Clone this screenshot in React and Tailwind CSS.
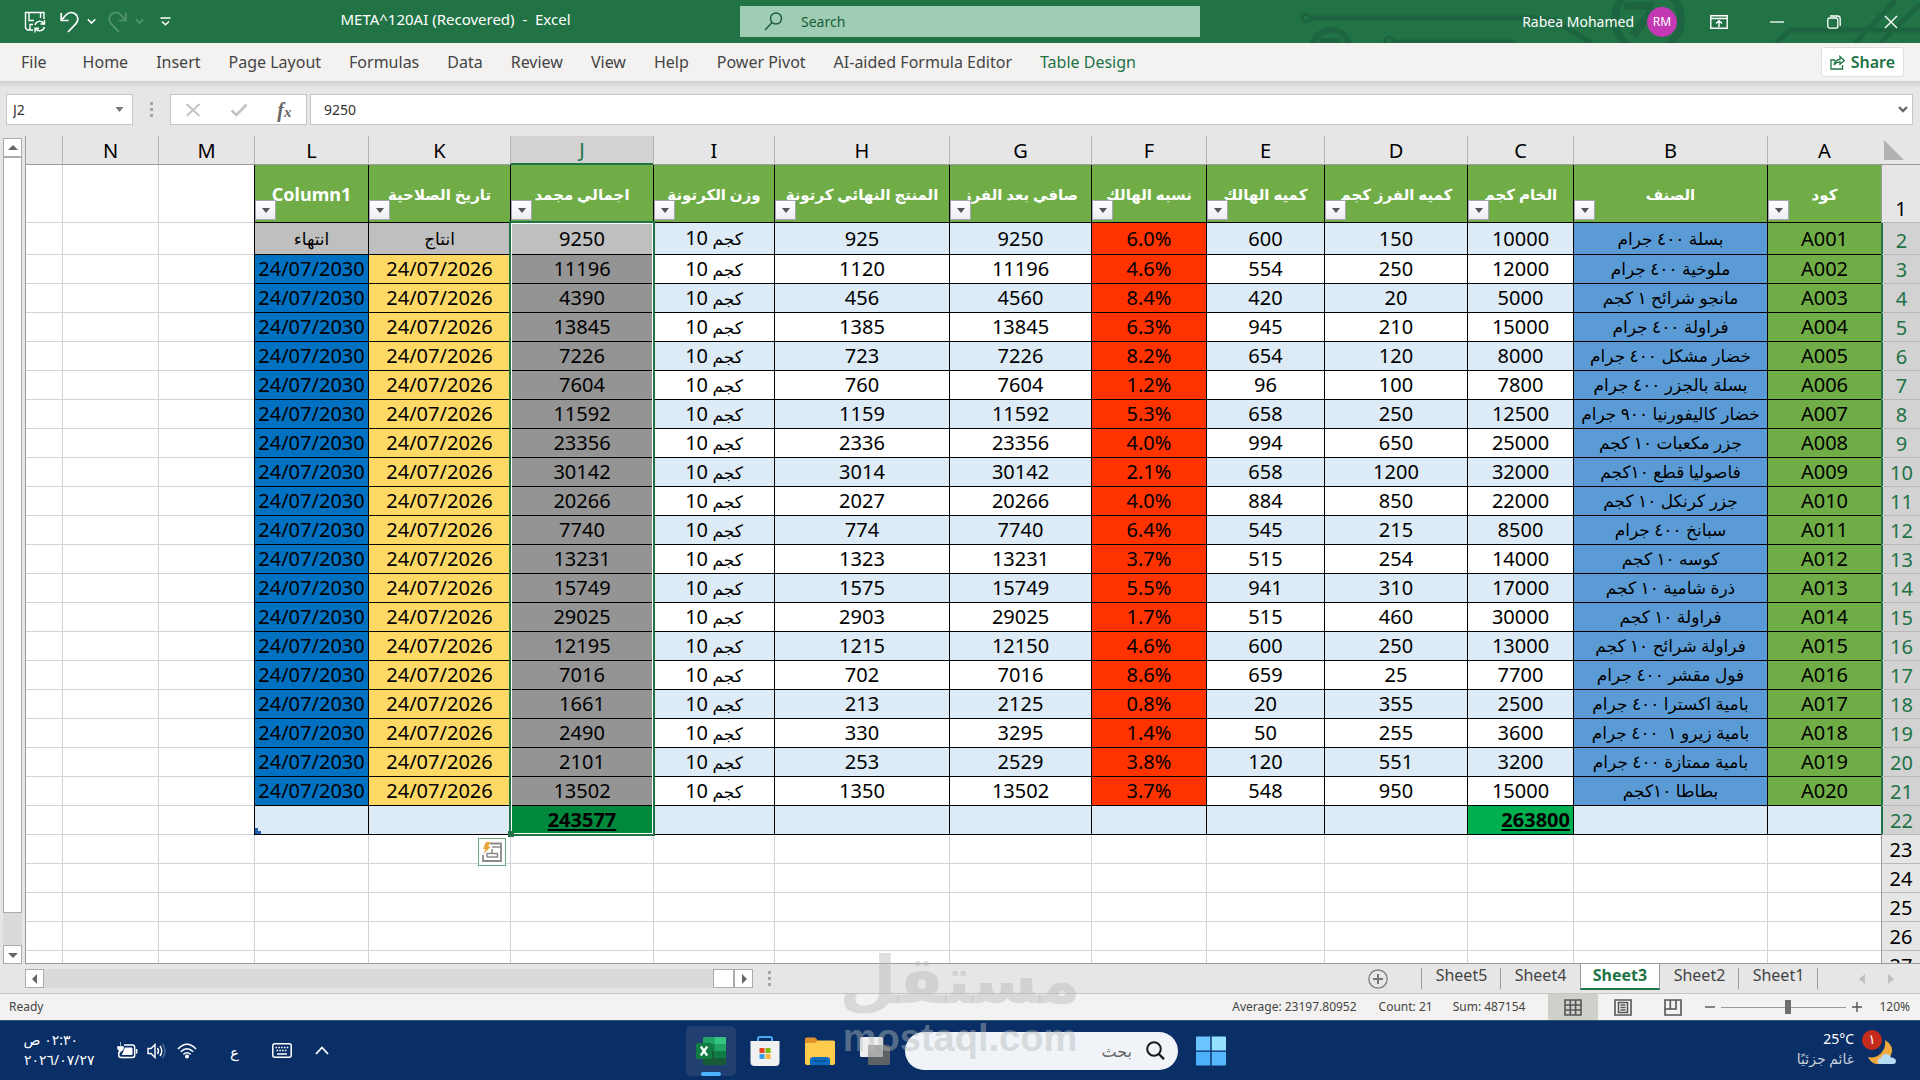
import React from "react";

const COLUMNS = [
  { id: "A", width: "w-[114px]", head: "كود" },
  { id: "B", width: "w-[194px]", head: "الصنف" },
  { id: "C", width: "w-[106px]", head: "الخام كجم" },
  { id: "D", width: "w-[143px]", head: "كميه الفرز كجم" },
  { id: "E", width: "w-[118px]", head: "كميه الهالك" },
  { id: "F", width: "w-[115px]", head: "نسبه الهالك" },
  { id: "G", width: "w-[142px]", head: "صافي بعد الفرز" },
  { id: "H", width: "w-[175px]", head: "المنتج النهائي كرتونة" },
  { id: "I", width: "w-[121px]", head: "وزن الكرتونة" },
  { id: "J", width: "w-[143px]", head: "اجمالي مجمد" },
  { id: "K", width: "w-[142px]", head: "تاريخ الصلاحية" },
  { id: "L", width: "w-[114px]", head: "Column1" },
];

const W = "كجم 10";
const P = "24/07/2026";
const X = "24/07/2030";
const DATA = [
  ["A001", "بسلة ٤٠٠ جرام", 10000, 150, 600, "6.0%", 9250, 925, W, 9250, "انتاج", "انتهاء"],
  ["A002", "ملوخية ٤٠٠ جرام", 12000, 250, 554, "4.6%", 11196, 1120, W, 11196, P, X],
  ["A003", "مانجو شرائح ١ كجم", 5000, 20, 420, "8.4%", 4560, 456, W, 4390, P, X],
  ["A004", "فراولة ٤٠٠ جرام", 15000, 210, 945, "6.3%", 13845, 1385, W, 13845, P, X],
  ["A005", "خضار مشكل ٤٠٠ جرام", 8000, 120, 654, "8.2%", 7226, 723, W, 7226, P, X],
  ["A006", "بسلة بالجزر ٤٠٠ جرام", 7800, 100, 96, "1.2%", 7604, 760, W, 7604, P, X],
  ["A007", "خضار كاليفورنيا ٩٠٠ جرام", 12500, 250, 658, "5.3%", 11592, 1159, W, 11592, P, X],
  ["A008", "جزر مكعبات ١٠ كجم", 25000, 650, 994, "4.0%", 23356, 2336, W, 23356, P, X],
  ["A009", "فاصوليا قطع ١٠كجم", 32000, 1200, 658, "2.1%", 30142, 3014, W, 30142, P, X],
  ["A010", "جزر كرنكل ١٠ كجم", 22000, 850, 884, "4.0%", 20266, 2027, W, 20266, P, X],
  ["A011", "سبانخ ٤٠٠ جرام", 8500, 215, 545, "6.4%", 7740, 774, W, 7740, P, X],
  ["A012", "كوسه ١٠ كجم", 14000, 254, 515, "3.7%", 13231, 1323, W, 13231, P, X],
  ["A013", "ذرة شامية ١٠ كجم", 17000, 310, 941, "5.5%", 15749, 1575, W, 15749, P, X],
  ["A014", "فراولة ١٠ كجم", 30000, 460, 515, "1.7%", 29025, 2903, W, 29025, P, X],
  ["A015", "فراولة شرائح ١٠ كجم", 13000, 250, 600, "4.6%", 12150, 1215, W, 12195, P, X],
  ["A016", "فول مقشر ٤٠٠ جرام", 7700, 25, 659, "8.6%", 7016, 702, W, 7016, P, X],
  ["A017", "بامية اكسترا ٤٠٠ جرام", 2500, 355, 20, "0.8%", 2125, 213, W, 1661, P, X],
  ["A018", "بامية زيرو ١  ٤٠٠ جرام", 3600, 255, 50, "1.4%", 3295, 330, W, 2490, P, X],
  ["A019", "بامية ممتازة ٤٠٠ جرام", 3200, 551, 120, "3.8%", 2529, 253, W, 2101, P, X],
  ["A020", "بطاطا ١٠كجم", 15000, 950, 548, "3.7%", 13502, 1350, W, 13502, P, X],
];

const FILLS = {
  A: "bg-[#70ad47]",
  B: "bg-[#5b9bd5]",
  F: "bg-[#ff3300]",
  J: "bg-[#949494]",
  K: "bg-[#ffd966]",
  L: "bg-[#0070c0]",
};

function fillFor(col, rowIndex) {
  if (rowIndex === 0 && (col === "J" || col === "K" || col === "L")) return "bg-[#bfbfbf]";
  return FILLS[col] || (rowIndex % 2 === 0 ? "bg-[#ddebf7]" : "bg-white");
}

const EMPTY_GRID = ["M", "N", "O"];
const MENU = ["Home", "Insert", "Page Layout", "Formulas", "Data", "Review", "View", "Help", "Power Pivot", "AI-aided Formula Editor"];

function Chevron({ className }) {
  return (
    <svg className={className} viewBox="0 0 8 6" fill="none" stroke="currentColor" strokeWidth="1.4">
      <path d="M0.7 1 L4 4.4 L7.3 1" />
    </svg>
  );
}

function Dots() {
  return (
    <span className="flex flex-col gap-[3px]" aria-hidden="true">
      <i className="size-[3px] bg-[#a6a6a6]" />
      <i className="size-[3px] bg-[#a6a6a6]" />
      <i className="size-[3px] bg-[#a6a6a6]" />
    </span>
  );
}

function TitleBar() {
  return (
    <header className="relative grid h-[43px] shrink-0 grid-cols-[37fr_23fr_36fr] items-center overflow-hidden bg-[#217346] text-white">
      <svg className="absolute top-0 right-0 h-[43px] w-[640px] text-[#1d6540]" viewBox="0 0 640 43" fill="none" stroke="currentColor" strokeWidth="5">
        <circle cx="26" cy="18" r="4" strokeWidth="3" />
        <path d="M31 18 H252" />
        <circle cx="51" cy="49" r="19" strokeWidth="6" />
        <path d="M39 41 H60" strokeWidth="6" />
        <circle cx="109" cy="41" r="4" strokeWidth="3" />
        <path d="M114 42 H235" />
        <path d="M248 17 L272 20 L312 43" />
        <circle cx="368" cy="19" r="33" strokeWidth="8" />
        <path d="M344 6 H374 M374 8 L353 36" strokeWidth="8" />
        <path d="M496 43 L510 30 H640" />
        <path d="M575 43 L616 0 M600 43 L640 4" />
      </svg>
      <div className="relative flex items-center pl-6">
        <button aria-label="Save" className="mr-[14px]">
          <svg className="h-[22px] w-[22px]" viewBox="0 0 22 22" fill="none" stroke="currentColor" strokeWidth="1.4">
            <path d="M9 19 H3.5 L1.5 17 V1.5 H20 V8" />
            <path d="M5 1.5 V9.5 H10 M16.5 1.5 V7" />
            <path d="M6 19 V13.5 H9" />
            <path d="M11 14 A5 5 0 0 1 20 12.5 M20.5 9 V13 H16.5 M20.5 16 A5 5 0 0 1 11.5 17.5 M11 21.5 V17.3 H15" />
          </svg>
        </button>
        <button aria-label="Undo" className="mr-2">
          <svg className="h-[22px] w-[19px]" viewBox="0 0 19 22" fill="none" stroke="currentColor" strokeWidth="1.7">
            <path d="M1.2 2 V9.5 H8.5 M1.5 9 L6 4 C9 0.8 13 0.8 15.8 3.4 C18.6 6 18.4 10 15.8 12.8 L8 21" />
          </svg>
        </button>
        <button aria-label="Undo options"><Chevron className="h-[7px] w-[9px]" /></button>
        <button aria-label="Redo" className="mr-2 ml-3 text-[#55966f]">
          <svg className="h-[22px] w-[19px]" viewBox="0 0 19 22" fill="none" stroke="currentColor" strokeWidth="1.7">
            <path d="M17.8 2 V9.5 H10.5 M17.5 9 L13 4 C10 0.8 6 0.8 3.2 3.4 C0.4 6 0.6 10 3.2 12.8 L11 21" />
          </svg>
        </button>
        <button aria-label="Redo options" className="text-[#55966f]"><Chevron className="h-[7px] w-[9px]" /></button>
        <button aria-label="Customize toolbar" className="ml-4">
          <svg className="h-[9px] w-[11px]" viewBox="0 0 11 9" fill="none" stroke="currentColor" strokeWidth="1.5">
            <path d="M0.5 1 H10.5 M2 4.5 L5.5 7.8 L9 4.5" />
          </svg>
        </button>
        <h1 className="flex-1 pb-1 text-center text-[15px] whitespace-pre">META^120AI (Recovered)  -  Excel</h1>
      </div>
      <label className="relative flex h-[31px] items-center gap-[18px] bg-[#9fcdb3] pl-6 text-[#185c37]">
        <svg className="h-[19px] w-[19px]" viewBox="0 0 19 19" fill="none" stroke="currentColor" strokeWidth="1.4">
          <circle cx="12" cy="6.5" r="5.5" />
          <path d="M8 10.5 L1 18" />
        </svg>
        <input className="min-w-0 flex-1 bg-transparent text-[14px] outline-none placeholder:text-[#185c37]" placeholder="Search" aria-label="Search" />
      </label>
      <div className="relative flex items-center justify-end">
        <span className="mr-[13px] text-[14px]">Rabea Mohamed</span>
        <button className="mr-[33px] flex size-[30px] items-center justify-center rounded-full bg-[#c239b3] text-[12px]">RM</button>
        <button aria-label="Ribbon display options" className="mr-[42px]">
          <svg className="h-[14px] w-[18px]" viewBox="0 0 18 14" fill="none" stroke="currentColor" strokeWidth="1.4">
            <path d="M0.8 0.8 H17.2 V13.2 H0.8 Z M1 3.5 H17 M9 12 V6 M6 8.5 L9 5.6 L12 8.5" />
          </svg>
        </button>
        <button aria-label="Minimize" className="mr-[43px]"><svg className="h-[14px] w-[14px]" viewBox="0 0 14 14" stroke="currentColor" strokeWidth="1.3"><path d="M0 7 H14" /></svg></button>
        <button aria-label="Restore" className="mr-[43px]">
          <svg className="h-[14px] w-[14px]" viewBox="0 0 14 14" fill="none" stroke="currentColor" strokeWidth="1.3">
            <rect x="0.8" y="3" width="10" height="10.2" rx="2" />
            <path d="M3 1 H10.5 A2.7 2.7 0 0 1 13.2 3.7 V11" />
          </svg>
        </button>
        <button aria-label="Close" className="mr-[22px]"><svg className="h-[14px] w-[14px]" viewBox="0 0 14 14" stroke="currentColor" strokeWidth="1.4"><path d="M1 1 L13 13 M13 1 L1 13" /></svg></button>
      </div>
    </header>
  );
}

function Ribbon() {
  return (
    <nav className="flex h-[38px] shrink-0 items-center bg-[#f3f2f1] pl-[7px] text-[16px] text-[#444]">
      <button className="mr-2 px-[14px]">File</button>
      {MENU.map((m) => <button key={m} className="px-[14px] whitespace-nowrap">{m}</button>)}
      <button className="px-[14px] whitespace-nowrap text-[#217346]">Table Design</button>
      <button className="mr-4 ml-auto flex h-[30px] items-center gap-[6px] rounded-[3px] border border-[#e1dfdd] bg-white px-2 font-semibold text-[#217346]">
        <svg className="h-[15px] w-[15px]" viewBox="0 0 15 15" fill="none" stroke="currentColor" strokeWidth="1.3">
          <path d="M5 5 H1 V14 H12.5 V10" />
          <path d="M4 10 C4.5 6.5 7 4.5 10 4.5 V1.5 L14.3 5.5 L10 9.3 V6.8 C7.5 6.8 5.5 7.8 4 10 Z" />
        </svg>
        Share
      </button>
    </nav>
  );
}

function FormulaBar() {
  return (
    <section className="flex h-[55px] shrink-0 items-start bg-gradient-to-b from-[#cfcfcf] to-[#e6e6e6] to-[12%] pt-[13px] pr-[7px] pl-[6px] text-[14px] text-[#333]">
      <div className="flex h-[31px] w-[127px] items-center border border-[#c6c6c6] bg-white pr-2 pl-[6px]">
        <input className="min-w-0 flex-1 outline-none" aria-label="Name box" defaultValue="J2" />
        <svg className="h-[5px] w-[9px]" viewBox="0 0 9 5"><path d="M0.5 0 H8.5 L4.5 5 Z" fill="#777" /></svg>
      </div>
      <div className="flex h-[31px] w-[37px] items-center justify-center"><Dots /></div>
      <div className="mr-[3px] flex h-[31px] w-[137px] items-center justify-around border border-[#c6c6c6] bg-white">
        <button aria-label="Cancel"><svg className="h-[14px] w-[16px]" viewBox="0 0 16 14" stroke="#c3c3c3" strokeWidth="2"><path d="M1.5 1 L14.5 13 M14.5 1 L1.5 13" /></svg></button>
        <button aria-label="Enter"><svg className="h-[14px] w-[18px]" viewBox="0 0 18 14" fill="none" stroke="#c3c3c3" strokeWidth="2.6"><path d="M1.5 7.5 L6.5 12 L16.5 1.5" /></svg></button>
        <button aria-label="Insert function" className="font-['Liberation_Serif',serif] text-[20px] leading-none font-bold text-[#666] italic">f<span className="text-[15px]">x</span></button>
      </div>
      <div className="flex h-[31px] flex-1 items-center border border-[#c6c6c6] bg-white pr-1 pl-[13px]">
        <input className="min-w-0 flex-1 outline-none" aria-label="Formula" defaultValue="9250" />
        <button aria-label="Expand formula bar" className="text-[#666]"><svg className="h-[7px] w-[10px]" viewBox="0 0 10 7" fill="none" stroke="currentColor" strokeWidth="2.4"><path d="M1 1 L5 5 L9 1" /></svg></button>
      </div>
    </section>
  );
}

function ArrowButton({ label, path }) {
  return (
    <button aria-label={label} className="flex h-[19px] w-[19px] shrink-0 items-center justify-center border border-[#ababab] bg-white">
      <svg className="size-[10px]" viewBox="0 0 10 10"><path d={path} fill="#666" /></svg>
    </button>
  );
}

function RowHeader({ n, selected }) {
  return (
    <th scope="row" className={`border-b border-b-[#b8b8b8] p-0 text-center align-bottom font-normal ${selected ? "border-l-2 border-l-[#217346] bg-[#d2d2d2] text-[#217346]" : "border-l border-l-[#9b9b9b]"}`}>
      {n}
    </th>
  );
}

function BlankCells() {
  return EMPTY_GRID.map((c) => <td key={c} className={`border-b border-[#d4d4d4] bg-white ${c === "O" ? "" : "border-l"}`} />);
}

function Sheet() {
  return (
    <table dir="rtl" className="w-full table-fixed border-separate border-spacing-0 text-[20px] leading-[26px] text-black">
      <colgroup>
        <col className="w-[39px]" />
        {COLUMNS.map((c) => <col key={c.id} className={c.width} />)}
        <col className="w-[96px]" />
        <col className="w-[96px]" />
        <col />
      </colgroup>
      <thead>
        <tr className="h-[29px]">
          <td className="border-b border-[#9b9b9b] p-0">
            <svg className="mr-auto ml-[3px] h-[20px] w-[20px]" viewBox="0 0 20 20"><path d="M0 0 V20 H20 Z" fill="#b1b1b1" /></svg>
          </td>
          {COLUMNS.map((c) => (
            <th key={c.id} scope="col" className={`border-l border-l-[#b4b4b4] p-0 text-center align-bottom font-normal ${c.id === "J" ? "border-b-2 border-b-[#217346] bg-[#d2d2d2] text-[#217346]" : "border-b border-b-[#9b9b9b]"}`}>
              {c.id}
            </th>
          ))}
          {EMPTY_GRID.map((c) => (
            <th key={c} scope="col" className={`border-b border-b-[#9b9b9b] border-l-[#b4b4b4] p-0 text-center align-bottom font-normal ${c === "O" ? "" : "border-l"}`}>{c === "O" ? "" : c}</th>
          ))}
        </tr>
      </thead>
      <tbody>
        <tr className="h-[58px]">
          <RowHeader n={1} />
          {COLUMNS.map((c) => (
            <td key={c.id} className={`relative border-b border-l border-black bg-[#70ad47] p-0 text-center font-bold whitespace-nowrap text-white ${c.id === "L" ? "text-[18px]" : "text-[15px]"}`}>
              {c.head}
              <button aria-label={`Filter ${c.head}`} className="absolute bottom-[2px] left-0 flex h-[20px] w-[21px] items-center justify-center border border-[#a6a6b4] bg-gradient-to-b from-white to-[#eceef2]">
                <svg className="h-[5px] w-[8px]" viewBox="0 0 8 5"><path d="M0 0 H8 L4 5 Z" fill="#555" /></svg>
              </button>
            </td>
          ))}
          <BlankCells />
        </tr>
        {DATA.map((row, r) => (
          <tr key={row[0]} className={r === 0 ? "h-[32px]" : "h-[29px]"}>
            <RowHeader n={r + 2} selected />
            {COLUMNS.map((c, i) => (
              <td key={c.id} className={`border-b border-l border-black p-0 text-center whitespace-pre ${fillFor(c.id, r)} ${c.id === "J" && r === 0 ? "relative" : ""} ${c.id === "B" || c.id === "I" || (r === 0 && i > 9) ? "text-[17px]" : ""}`}>
                {c.id === "I" ? <>كجم <span className="text-[20px]">10</span></> : row[i]}
                {c.id === "J" && r === 0 && (
                  <span className="pointer-events-none absolute top-[-2px] right-[-2px] left-[-2px] z-10 h-[615px] border-2 border-[#217346]">
                    <span className="block h-full border border-white" />
                    <span className="absolute bottom-[-3px] left-[-3px] size-[6px] bg-[#217346]" />
                  </span>
                )}
              </td>
            ))}
            <BlankCells />
          </tr>
        ))}
        <tr className="h-[29px]">
          <RowHeader n={22} selected />
          {COLUMNS.map((c) => {
            if (c.id === "C") return <td key={c.id} className="border-b border-l border-black bg-[#00b050] p-0 pr-[3px] text-right font-bold underline underline-offset-2">263800</td>;
            if (c.id === "J") return <td key={c.id} className="border-b border-l border-black bg-[#00893d] p-0 text-center font-bold underline underline-offset-2">243577</td>;
            return (
              <td key={c.id} className="border-b border-l border-black bg-[#ddebf7] p-0 align-bottom">
                {c.id === "L" && <svg className="mr-auto size-[6px]" viewBox="0 0 6 6"><path d="M0 0 H3 V3 H6 V6 H0 Z" fill="#1f5fae" /></svg>}
              </td>
            );
          })}
          <BlankCells />
        </tr>
        {[23, 24, 25, 26, 27].map((n) => (
          <tr key={n} className="h-[29px]">
            <RowHeader n={n} />
            {COLUMNS.map((c) => (
              <td key={c.id} className="relative border-b border-l border-[#d4d4d4] bg-white p-0">
                {n === 23 && c.id === "K" && (
                  <button aria-label="Quick analysis" className="absolute top-[3px] right-1 z-20 flex size-[28px] items-center justify-center border border-[#6faa86] bg-white">
                    <svg className="size-[22px]" viewBox="0 0 22 22" fill="none" stroke="#8a8a8a" strokeWidth="1.8">
                      <path d="M9 2.5 H20 V20 H2 V14" />
                      <path d="M11 6 H20 M6 16 V12.5 H11 V8 M6 16 H16.5 V12.5 H11" strokeWidth="1.5" />
                      <path d="M5 1 H9.5 L7 5.5 H10 L2.5 13 L4.5 8 H2 Z" fill="#e8a33d" stroke="none" />
                    </svg>
                  </button>
                )}
              </td>
            ))}
            <BlankCells />
          </tr>
        ))}
      </tbody>
    </table>
  );
}

function SheetTab({ name, divided }) {
  return (
    <button className="relative flex h-[22px] w-[79px] items-center justify-center self-start">
      {name}
      {divided && <span className="absolute top-[4px] right-0 h-[21px] w-px bg-[#9b9b9b]" />}
    </button>
  );
}

function SheetTabs() {
  return (
    <section className="flex h-[30px] shrink-0 items-center border-b border-[#c6c6c6] bg-[#e6e6e6] pl-[25px] text-[16px] text-[#444]">
      <div className="flex w-[728px] items-center bg-[#dadada]">
        <ArrowButton label="Scroll left" path="M7 0 V10 L2 5 Z" />
        <span className="ml-auto h-[19px] w-[21px] border border-[#ababab] bg-white" />
        <ArrowButton label="Scroll right" path="M3 0 V10 L8 5 Z" />
      </div>
      <span className="ml-[15px]"><Dots /></span>
      <button aria-label="New sheet" className="mr-[33px] ml-auto">
        <svg className="size-[20px]" viewBox="0 0 20 20" fill="none" stroke="#767676"><circle cx="10" cy="10" r="9.2" strokeWidth="1.2" /><path d="M10 5 V15 M5 10 H15" strokeWidth="2" /></svg>
      </button>
      <span className="h-[21px] w-px bg-[#9b9b9b]" />
      <SheetTab name="Sheet5" divided />
      <SheetTab name="Sheet4" />
      <button className="flex h-[26px] w-[80px] items-center justify-center self-start border-x border-b-2 border-x-[#9b9b9b] border-b-[#217346] bg-white pb-[2px] font-bold text-[#217346]">Sheet3</button>
      <SheetTab name="Sheet2" divided />
      <SheetTab name="Sheet1" divided />
      <button aria-label="Previous sheet" className="ml-[40px]"><svg className="h-[10px] w-[8px]" viewBox="0 0 8 10"><path d="M7 0 V10 L1 5 Z" fill="#c0c0c0" /></svg></button>
      <button aria-label="Next sheet" className="mr-[25px] ml-[21px]"><svg className="h-[10px] w-[8px]" viewBox="0 0 8 10"><path d="M1 0 V10 L7 5 Z" fill="#c0c0c0" /></svg></button>
    </section>
  );
}

function StatusBar() {
  return (
    <section className="flex h-[26px] shrink-0 items-center bg-[#f3f2f1] pl-[9px] text-[12px] text-[#444]">
      <span>Ready</span>
      <span className="ml-auto">Average: 23197.80952</span>
      <span className="ml-[22px]">Count: 21</span>
      <span className="ml-5">Sum: 487154</span>
      <button aria-label="Normal view" className="ml-[23px] flex h-full w-[50px] items-center justify-center bg-[#cfcfcb]">
        <svg className="h-[17px] w-[18px]" viewBox="0 0 18 17" fill="none" stroke="#555" strokeWidth="1.6"><path d="M1 1 H17 V16 H1 Z M1 6 H17 M1 11 H17 M6.3 1 V16 M11.6 1 V16" /></svg>
      </button>
      <button aria-label="Page layout view" className="flex h-full w-[50px] items-center justify-center">
        <svg className="h-[17px] w-[18px]" viewBox="0 0 18 17" fill="none" stroke="#555" strokeWidth="1.6"><path d="M1 1 H17 V16 H1 Z M4.5 3.5 H13.5 V13.5 H4.5 Z M6.5 6 H11.5 M6.5 8.5 H11.5 M6.5 11 H11.5" /></svg>
      </button>
      <button aria-label="Page break view" className="flex h-full w-[50px] items-center justify-center">
        <svg className="h-[17px] w-[18px]" viewBox="0 0 18 17" fill="none" stroke="#555" strokeWidth="1.6"><path d="M1 1 H17 V16 H1 Z M1 10 H12 V1 M6.3 1 V10" /></svg>
      </button>
      <button aria-label="Zoom out" className="ml-[7px]"><svg className="size-[10px]" viewBox="0 0 10 10" stroke="#555" strokeWidth="1.4"><path d="M0 5 H10" /></svg></button>
      <input
        type="range"
        aria-label="Zoom"
        min="10"
        max="230"
        defaultValue="128"
        className="mx-[6px] h-[14px] w-[125px] appearance-none bg-[linear-gradient(#9b9b9b,#9b9b9b)] bg-[length:100%_1px] bg-center bg-no-repeat [&::-webkit-slider-thumb]:h-[14px] [&::-webkit-slider-thumb]:w-[6px] [&::-webkit-slider-thumb]:appearance-none [&::-webkit-slider-thumb]:bg-[#6e6e6e]"
      />
      <button aria-label="Zoom in"><svg className="size-[10px]" viewBox="0 0 10 10" stroke="#555" strokeWidth="1.4"><path d="M0 5 H10 M5 0 V10" /></svg></button>
      <button className="mr-[10px] ml-[17px]">120%</button>
    </section>
  );
}

function Taskbar() {
  return (
    <footer className="grid h-[60px] shrink-0 grid-cols-[1fr_auto_1fr] items-center border-t border-[#2a5a70] bg-[#0a2f66] text-white">
      <div className="flex items-center pl-6">
        <div className="w-[93px] pb-[2px] text-[14px] leading-[20px]">
          <p dir="rtl" className="w-[54px] whitespace-nowrap">٠٢:٣٠ ص</p>
          <p className="w-[72px] whitespace-nowrap">٢٠٢٦/٠٧/٢٧</p>
        </div>
        <svg className="mr-[9px] h-[17px] w-[21px]" viewBox="0 0 21 17" fill="none" stroke="#fff" strokeWidth="1.5">
          <path d="M7 3 H15.5 A2.2 2.2 0 0 1 17.7 5.2 V13.3 A2.2 2.2 0 0 1 15.5 15.5 H4 A2.2 2.2 0 0 1 1.8 13.3 V10" />
          <path d="M8 5.5 H14.5 Q15.5 5.5 15.5 6.5 V12 Q15.5 13 14.5 13 H4.8 Z" fill="#fff" stroke="none" />
          <path d="M19 7 H20.4 V11.5 H19 Z" fill="#fff" stroke="none" />
          <path d="M3.5 0 V4 M0.5 4.5 H6.5 V7 Q5.5 8.5 2 11 L2 8.5 L0.5 7 Z" fill="#fff" strokeWidth="0.6" />
        </svg>
        <svg className="mr-[10px] h-[16px] w-[20px]" viewBox="0 0 20 16" fill="none" stroke="#fff" strokeWidth="1.4">
          <path d="M1 5.5 H4 L8 1.5 V14.5 L4 10.5 H1 Z" />
          <path d="M10.5 5 Q12.5 8 10.5 11 M13 3 Q16.5 8 13 13" />
          <path d="M15.5 1 Q20.5 8 15.5 15" stroke="#4f6d94" />
        </svg>
        <svg className="h-[16px] w-[20px]" viewBox="0 0 20 16" fill="none" stroke="#fff" strokeWidth="1.5">
          <path d="M1 6 Q10 -3.5 19 6 M3.8 8.8 Q10 2.5 16.2 8.8 M6.4 11.4 Q10 8 13.6 11.4" />
          <circle cx="10" cy="13.6" r="2" fill="#fff" stroke="none" />
        </svg>
        <span className="mx-[33px] pt-1 text-[15px]">ع</span>
        <svg className="mr-[23px] h-[15px] w-[20px]" viewBox="0 0 20 15" fill="none" stroke="#fff" strokeWidth="1.5">
          <rect x="0.8" y="0.8" width="18.4" height="13.4" rx="2" />
          <path d="M3.5 4.5 H16.5 M4.5 7.5 H15.5" strokeDasharray="1.6 1.2" strokeWidth="1.6" />
          <path d="M5 11 H15" />
        </svg>
        <button aria-label="Hidden icons"><svg className="h-[9px] w-[14px]" viewBox="0 0 14 9" fill="none" stroke="#fff" strokeWidth="1.8"><path d="M1 8 L7 1.5 L13 8" /></svg></button>
      </div>
      <div className="flex items-center">
        <button aria-label="Excel" className="relative mr-[14px] flex size-[50px] items-center justify-center rounded-[5px] bg-[#213f70]">
          <svg className="size-[30px]" viewBox="0 0 30 30">
            <rect x="7" y="1" width="23" height="28" rx="1.5" fill="#21a366" />
            <path d="M7 8 H18.5 V15 H7 Z" fill="#107c41" /><path d="M18.5 1 H30 V8 H18.5 Z" fill="#33c481" /><path d="M18.5 15 H30 V22 H18.5 Z" fill="#107c41" /><path d="M7 15 H18.5 V22 H7 Z M7 22 H30 V28 Q30 29 29 29 H8 Q7 29 7 28 Z" fill="#185c37" />
            <rect x="0" y="7" width="16" height="16" rx="1.5" fill="#107c41" />
            <path d="M4.8 10.5 L11.2 19.5 M11.2 10.5 L4.8 19.5" stroke="#fff" strokeWidth="2.2" />
          </svg>
          <span className="absolute bottom-0 left-[15px] h-[4px] w-[20px] rounded-full bg-[#4db2ff]" />
        </button>
        <button aria-label="Store" className="mr-[25px]">
          <svg className="size-[30px]" viewBox="0 0 30 30">
            <path d="M8 6 V2.5 Q8 1 9.5 1 H20.5 Q22 1 22 2.5 V6" fill="none" stroke="#4aa8f0" strokeWidth="2" />
            <path d="M0.5 5 H29.5 V26 Q29.5 30 25.5 30 H4.5 Q0.5 30 0.5 26 Z" fill="#f1f1f1" />
            <path d="M9.5 12 H14.5 V17 H9.5 Z" fill="#e8441f" /><path d="M15.5 12 H20.5 V17 H15.5 Z" fill="#7fba00" /><path d="M9.5 18 H14.5 V23 H9.5 Z" fill="#3a9be8" /><path d="M15.5 18 H20.5 V23 H15.5 Z" fill="#ffb63c" />
          </svg>
        </button>
        <button aria-label="File Explorer" className="mr-[25px]">
          <svg className="size-[30px]" viewBox="0 0 30 30">
            <path d="M0 3 Q0 1.5 1.5 1.5 H10 L13 4.5 V9 H0 Z" fill="#e0932a" />
            <path d="M0 7 H10 L13 4.5 H28.5 Q30 4.5 30 6 V27 Q30 29 28 29 H2 Q0 29 0 27 Z" fill="#ffcb4d" />
            <path d="M5 29 V24 Q5 21 8 21 H22 Q25 21 25 24 V29 Z" fill="#0f6cbd" />
            <path d="M9 25 H21" stroke="#0a4f94" strokeWidth="1.5" />
          </svg>
        </button>
        <button aria-label="Task view" className="mr-[15px]">
          <svg className="size-[30px]" viewBox="0 0 30 30">
            <rect x="8" y="9" width="22" height="20" rx="1.5" fill="#5f6265" />
            <rect x="0" y="1" width="23" height="20" rx="1.5" fill="#efefef" />
            <path d="M8 9 H23 V21 H8 Z" fill="#a9aaac" />
          </svg>
        </button>
        <label dir="rtl" className="mr-[18px] flex h-[38px] w-[273px] items-center gap-[14px] rounded-full bg-[#f0f3f8] pr-[13px] pl-4">
          <svg className="size-[19px]" viewBox="0 0 19 19" fill="none" stroke="#1b1b1b" strokeWidth="2"><circle cx="8" cy="8" r="6.8" /><path d="M12.8 13 L18 18.2" strokeWidth="2.4" /></svg>
          <input className="min-w-0 flex-1 bg-transparent text-[16px] outline-none placeholder:text-[#666]" placeholder="بحث" aria-label="بحث" />
        </label>
        <button aria-label="Start" className="mr-[8px]">
          <svg className="size-[30px]" viewBox="0 0 30 30">
            <path d="M0 1.5 Q0 0.5 1 0.5 H14.3 V14.5 H0 Z" fill="#6cc4ff" /><path d="M15.7 0.5 H29 Q30 0.5 30 1.5 V14.5 H15.7 Z" fill="#93e0ff" /><path d="M0 15.8 H14.3 V29.5 H1 Q0 29.5 0 28.5 Z" fill="#4cb0fb" /><path d="M15.7 15.8 H30 V28.5 Q30 29.5 29 29.5 H15.7 Z" fill="#55b8ff" />
          </svg>
        </button>
      </div>
      <div className="flex items-center justify-end gap-2 pr-6 pb-1">
        <div className="text-right text-[14px] leading-[20px]">
          <p>25°C</p>
          <p dir="rtl" className="text-[#c8d0dc]">غائم جزئيًا</p>
        </div>
        <span className="relative flex size-[34px] items-end justify-end">
          <svg className="h-[26px] w-[28px]" viewBox="0 0 28 26">
            <path d="M17 0 Q27 6 23 15 Q18 25 8 24 Q3 23 0 17 Q9 19 14 12 Q18 7 17 0 Z" fill="#f0a93c" />
            <path d="M13 24 Q9 24 9.5 20.5 Q10 18 13 18 Q14 14 18 14 Q22 14 23 17.5 Q27.5 17.5 28 21 Q28 24 25 24 Z" fill="#b9dcf5" />
          </svg>
          <span className="absolute top-[-2px] left-0 flex size-[20px] items-center justify-center rounded-full bg-[#c42b1c] text-[13px] leading-none">١</span>
        </span>
      </div>
    </footer>
  );
}

export default function App() {
  return (
    <div className="relative flex h-screen flex-col overflow-hidden bg-[#e6e6e6] font-['Noto_Sans','DejaVu_Sans',sans-serif]">
      <TitleBar />
      <Ribbon />
      <FormulaBar />
      <main className="flex min-h-0 flex-1">
        <div className="flex w-[25px] shrink-0 flex-col bg-[#e6e6e6] pt-[2px] pl-[3px]">
          <ArrowButton label="Scroll up" path="M0 7 H10 L5 2 Z" />
          <div className="flex w-[19px] flex-1 flex-col bg-[#dadada] pb-8"><span className="flex-1 border border-[#ababab] bg-white" /></div>
          <ArrowButton label="Scroll down" path="M0 3 H10 L5 8 Z" />
        </div>
        <div className="min-w-0 flex-1 overflow-hidden border-b border-l border-[#9b9b9b]"><Sheet /></div>
      </main>
      <SheetTabs />
      <StatusBar />
      <Taskbar />
      <div className="pointer-events-none absolute bottom-[22px] left-1/2 z-30 flex -translate-x-1/2 flex-col items-center font-bold text-[#b4bab8]/45">
        <span dir="rtl" className="text-[66px] leading-[82px]">مستقل</span>
        <span className="font-['Liberation_Sans',sans-serif] text-[38px] leading-[40px]">mostaql.com</span>
      </div>
    </div>
  );
}
